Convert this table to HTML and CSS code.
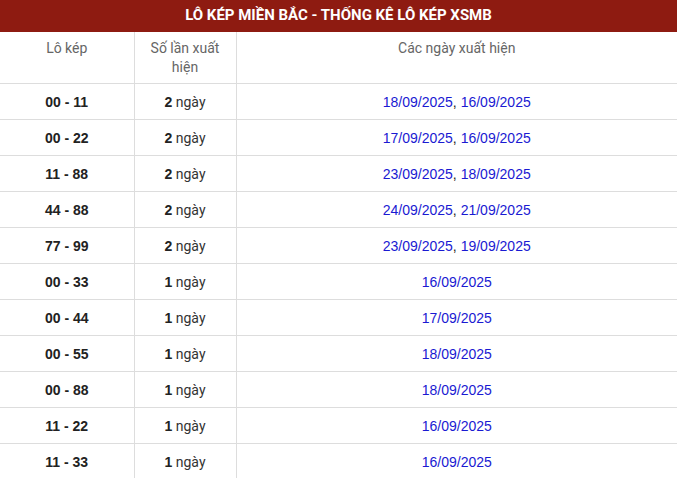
FILE: index.html
```html
<!DOCTYPE html>
<html lang="vi">
<head>
<meta charset="utf-8">
<title>Lô kép miền Bắc</title>
<link rel="stylesheet" href="styles.css">
</head>
<body>
<div class="box">
  <h2 class="title">LÔ KÉP MIỀN BẮC - THỐNG KÊ LÔ KÉP XSMB</h2>
  <table class="tbl">
    <colgroup><col class="c1"><col class="c2"><col class="c3"></colgroup>
    <thead>
      <tr><th>Lô kép</th><th>Số lần xuất hiện</th><th>Các ngày xuất hiện</th></tr>
    </thead>
    <tbody>
      <tr><td class="pair">00 - 11</td><td class="cnt"><b>2</b> ngày</td><td class="dates"><span>18/09/2025</span>, <span>16/09/2025</span></td></tr>
      <tr><td class="pair">00 - 22</td><td class="cnt"><b>2</b> ngày</td><td class="dates"><span>17/09/2025</span>, <span>16/09/2025</span></td></tr>
      <tr><td class="pair">11 - 88</td><td class="cnt"><b>2</b> ngày</td><td class="dates"><span>23/09/2025</span>, <span>18/09/2025</span></td></tr>
      <tr><td class="pair">44 - 88</td><td class="cnt"><b>2</b> ngày</td><td class="dates"><span>24/09/2025</span>, <span>21/09/2025</span></td></tr>
      <tr><td class="pair">77 - 99</td><td class="cnt"><b>2</b> ngày</td><td class="dates"><span>23/09/2025</span>, <span>19/09/2025</span></td></tr>
      <tr><td class="pair">00 - 33</td><td class="cnt"><b>1</b> ngày</td><td class="dates"><span>16/09/2025</span></td></tr>
      <tr><td class="pair">00 - 44</td><td class="cnt"><b>1</b> ngày</td><td class="dates"><span>17/09/2025</span></td></tr>
      <tr><td class="pair">00 - 55</td><td class="cnt"><b>1</b> ngày</td><td class="dates"><span>18/09/2025</span></td></tr>
      <tr><td class="pair">00 - 88</td><td class="cnt"><b>1</b> ngày</td><td class="dates"><span>18/09/2025</span></td></tr>
      <tr><td class="pair">11 - 22</td><td class="cnt"><b>1</b> ngày</td><td class="dates"><span>16/09/2025</span></td></tr>
      <tr><td class="pair">11 - 33</td><td class="cnt"><b>1</b> ngày</td><td class="dates"><span>16/09/2025</span></td></tr>
    </tbody>
  </table>
</div>
</body>
</html>
```
FILE: styles.css
```css
html, body {
  margin: 0;
  padding: 0;
  background: #fff;
}
body {
  font-family: "Liberation Sans", Arial, sans-serif;
  font-size: 14px;
  color: #222;
}
.box {
  width: 677px;
}
.title {
  margin: 0;
  height: 32px;
  line-height: 30px;
  background: #8e1b11;
  color: #fff;
  text-align: center;
  font-family: Roboto, "Liberation Sans", sans-serif;
  font-weight: 700;
  font-size: 15px;
}
.tbl {
  width: 100%;
  border-collapse: collapse;
  table-layout: fixed;
}
.c1 { width: 134px; }
.c2 { width: 102px; }
.tbl th {
  font-family: Roboto, "Liberation Sans", sans-serif;
  font-weight: 400;
  font-size: 14px;
  color: #666;
  line-height: 19px;
  padding: 7px 10px 6px;
  vertical-align: top;
  text-align: center;
  border-bottom: 1px solid #ddd;
  border-left: 1px solid #ddd;
  height: 38px;
}
.tbl td {
  height: 35px;
  padding: 0 8px;
  text-align: center;
  vertical-align: middle;
  border-bottom: 1px solid #ddd;
  border-left: 1px solid #ddd;
}
.tbl th:first-child, .tbl td:first-child {
  border-left: none;
}
.pair {
  font-weight: 700;
  font-size: 14px;
  color: #222;
}
.cnt {
  font-family: Roboto, "Liberation Sans", sans-serif;
  color: #333;
}
.cnt b {
  font-family: "Liberation Sans", Arial, sans-serif;
  color: #222;
}
.dates {
  color: #222;
}
.dates span {
  color: #1a1ad2;
}
```
